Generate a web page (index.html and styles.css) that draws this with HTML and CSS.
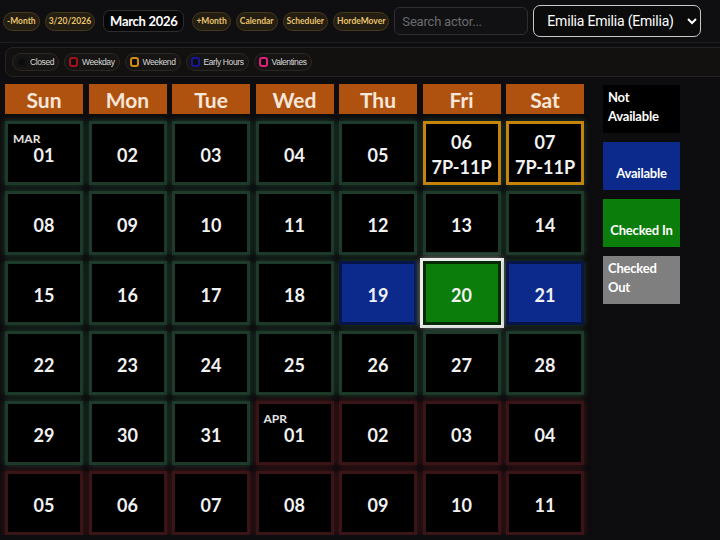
FILE: index.html
```html
<!DOCTYPE html>
<html lang="en">
<head>
    <meta charset="UTF-8">
    <meta name="viewport" content="width=device-width, initial-scale=1.0">
    <title>Calendar</title>
    <link rel="stylesheet" href="styles.css">
</head>
<body>
    <div class="topbar">
        <button class="pill">-Month</button>
        <button class="pill">3/20/2026</button>
        <div class="month-title">March 2026</div>
        <button class="pill">+Month</button>
        <button class="pill">Calendar</button>
        <button class="pill">Scheduler</button>
        <button class="pill">HordeMover</button>
        <input type="text" class="search" placeholder="Search actor...">
        <select class="actor-select">
            <option>Emilia Emilia (Emilia)</option>
        </select>
    </div>

    <div class="legend">
        <span class="chip"><i class="swatch closed"></i>Closed</span>
        <span class="chip"><i class="swatch weekday"></i>Weekday</span>
        <span class="chip"><i class="swatch weekend"></i>Weekend</span>
        <span class="chip"><i class="swatch early"></i>Early Hours</span>
        <span class="chip"><i class="swatch valentines"></i>Valentines</span>
    </div>

    <div class="main">
        <div class="calendar" id="calendar">
            <div class="dow">Sun</div>
            <div class="dow">Mon</div>
            <div class="dow">Tue</div>
            <div class="dow">Wed</div>
            <div class="dow">Thu</div>
            <div class="dow">Fri</div>
            <div class="dow">Sat</div>
            <!-- day cells are added by the script below -->
        </div>

        <div class="status-key">
            <div class="status not-available">Not Available</div>
            <div class="status available">Available</div>
            <div class="status checked-in">Checked In</div>
            <div class="status checked-out">Checked Out</div>
        </div>
    </div>

    <script>
        // month label, day number, shift text, state
        const days = [
            { m: 'MAR', d: '01' }, { d: '02' }, { d: '03' }, { d: '04' }, { d: '05' },
            { d: '06', shift: '7P-11P', kind: 'weekend' }, { d: '07', shift: '7P-11P', kind: 'weekend' },
            { d: '08' }, { d: '09' }, { d: '10' }, { d: '11' }, { d: '12' }, { d: '13' }, { d: '14' },
            { d: '15' }, { d: '16' }, { d: '17' }, { d: '18' },
            { d: '19', kind: 'available' }, { d: '20', kind: 'checked-in selected' }, { d: '21', kind: 'available' },
            { d: '22' }, { d: '23' }, { d: '24' }, { d: '25' }, { d: '26' }, { d: '27' }, { d: '28' },
            { d: '29' }, { d: '30' }, { d: '31' },
            { m: 'APR', d: '01', next: true }, { d: '02', next: true }, { d: '03', next: true }, { d: '04', next: true },
            { d: '05', next: true }, { d: '06', next: true }, { d: '07', next: true }, { d: '08', next: true },
            { d: '09', next: true }, { d: '10', next: true }, { d: '11', next: true }
        ];

        const calendar = document.getElementById('calendar');
        days.forEach(day => {
            const cell = document.createElement('div');
            cell.className = 'day' + (day.next ? ' next-month' : '') + (day.kind ? ' ' + day.kind : '');
            let html = '';
            if (day.m) html += `<span class="month-tag">${day.m}</span>`;
            html += `<span class="num">${day.d}</span>`;
            if (day.shift) html += `<span class="num">${day.shift}</span>`;
            cell.innerHTML = html;
            calendar.appendChild(cell);
        });
    </script>
</body>
</html>
```

FILE: styles.css
```css
body {
    margin: 0;
    background-color: #0d0c0e;
    font-family: Lato, "Open Sans", sans-serif;
    color: #f0f0f0;
    overflow-x: hidden;
}
.topbar {
    display: flex;
    align-items: center;
    gap: 5px;
    height: 42px;
    padding: 0 3px;
    background-color: #0f0f11;
    border-bottom: 1px solid #1e1e20;
    white-space: nowrap;
}
.pill {
    flex-shrink: 0;
    height: 19px;
    padding: 0 3px;
    font-family: Lato, sans-serif;
    font-size: 8.5px;
    font-weight: 700;
    color: #e9c36c;
    background-color: #231d12;
    border: 1px solid #46391c;
    border-radius: 10px;
    cursor: pointer;
}
.month-title {
    flex-shrink: 0;
    margin: 0 3px;
    padding: 2px 6px;
    font-size: 13px;
    font-weight: 700;
    letter-spacing: -0.3px;
    color: #fff;
    background-color: #070707;
    border: 1px solid #2e2e30;
    border-radius: 7px;
}
.search {
    flex-shrink: 0;
    box-sizing: border-box;
    width: 134px;
    height: 28px;
    padding: 0 7px;
    font-family: "Liberation Sans Narrow", Roboto, sans-serif;
    font-size: 13px;
    letter-spacing: -0.2px;
    color: #ddd;
    background-color: #111113;
    border: 1px solid #2f2f33;
    border-radius: 6px;
}
.search::placeholder {
    color: #6a6a6e;
}
.actor-select {
    flex-shrink: 0;
    box-sizing: border-box;
    width: 168px;
    height: 32px;
    padding: 0 6px 0 9px;
    font-family: "Liberation Sans Narrow", Roboto, sans-serif;
    font-size: 14px;
    letter-spacing: -0.2px;
    color: #fff;
    background-color: #0b0b0c;
    border: 1px solid #c9c9c9;
    border-radius: 7px;
}
.legend {
    display: flex;
    gap: 5px;
    margin: 4px -20px 0 5px;
    padding: 5px 6px;
    background-color: #131110;
    border: 1px solid #262422;
    border-radius: 8px;
}
.chip {
    display: flex;
    align-items: center;
    gap: 4px;
    height: 16px;
    padding: 0 4px;
    font-family: "Liberation Sans", sans-serif;
    font-size: 8.5px;
    letter-spacing: -0.4px;
    color: #d8d8d8;
    background-color: #161514;
    border: 1px solid #2a2826;
    border-radius: 9px;
}
.swatch {
    width: 5px;
    height: 6px;
    border: 2px solid #111;
    border-radius: 3px;
    background-color: #0c0c0c;
}
.swatch.weekday { border-color: #a4111d; }
.swatch.weekend { border-color: #d08b12; }
.swatch.early { border-color: #15179a; }
.swatch.valentines { border-color: #e0207c; }
.main {
    display: flex;
    gap: 19px;
    padding: 7px 0 0 5px;
}
.calendar {
    display: grid;
    grid-template-columns: repeat(7, 78px);
    grid-template-rows: 31px;
    grid-auto-rows: 64px;
    column-gap: 5.5px;
    row-gap: 6px;
}
.dow {
    display: flex;
    align-items: center;
    justify-content: center;
    margin-bottom: 1px;
    font-size: 21px;
    font-weight: 700;
    color: #f6e7da;
    background-color: #b0520f;
}
.day {
    position: relative;
    display: flex;
    flex-direction: column;
    align-items: center;
    justify-content: center;
    padding-top: 4px;
    background-color: #000;
    border: 3px solid #1d3a2b;
    box-shadow: 0 0 6px rgba(40, 90, 64, 0.7);
}
.day.next-month {
    border-color: #3a1518;
    box-shadow: 0 0 6px rgba(100, 25, 30, 0.7);
}
.num {
    font-size: 18px;
    font-weight: 700;
    line-height: 25px;
    color: #f2f2f2;
}
.month-tag {
    position: absolute;
    top: 7px;
    left: 5px;
    font-size: 12px;
    font-weight: 700;
    color: #e4e4e4;
}
.day.weekend {
    border-color: #c6840c;
}
.day.available {
    background-color: #0b2a8c;
    border-color: #071548;
}
.day.checked-in {
    background-color: #0a7d0a;
    border-color: #052a05;
}
.day.selected {
    outline: 3px solid #ececec;
    box-shadow: 0 0 7px 2px rgba(255, 255, 255, 0.6);
}
.status-key {
    display: flex;
    flex-direction: column;
    gap: 9px;
    padding-top: 1px;
}
.status {
    display: flex;
    align-items: flex-end;
    justify-content: center;
    box-sizing: border-box;
    width: 77px;
    height: 48px;
    padding: 6px 5px 7px;
    font-size: 13px;
    font-weight: 700;
    letter-spacing: -0.2px;
    line-height: 19px;
    color: #fff;
}
.not-available { background-color: #000; }
.available { background-color: #0b2a8c; }
.checked-in { background-color: #0a7d0a; }
.checked-out { background-color: #7f7f7f; }
```
